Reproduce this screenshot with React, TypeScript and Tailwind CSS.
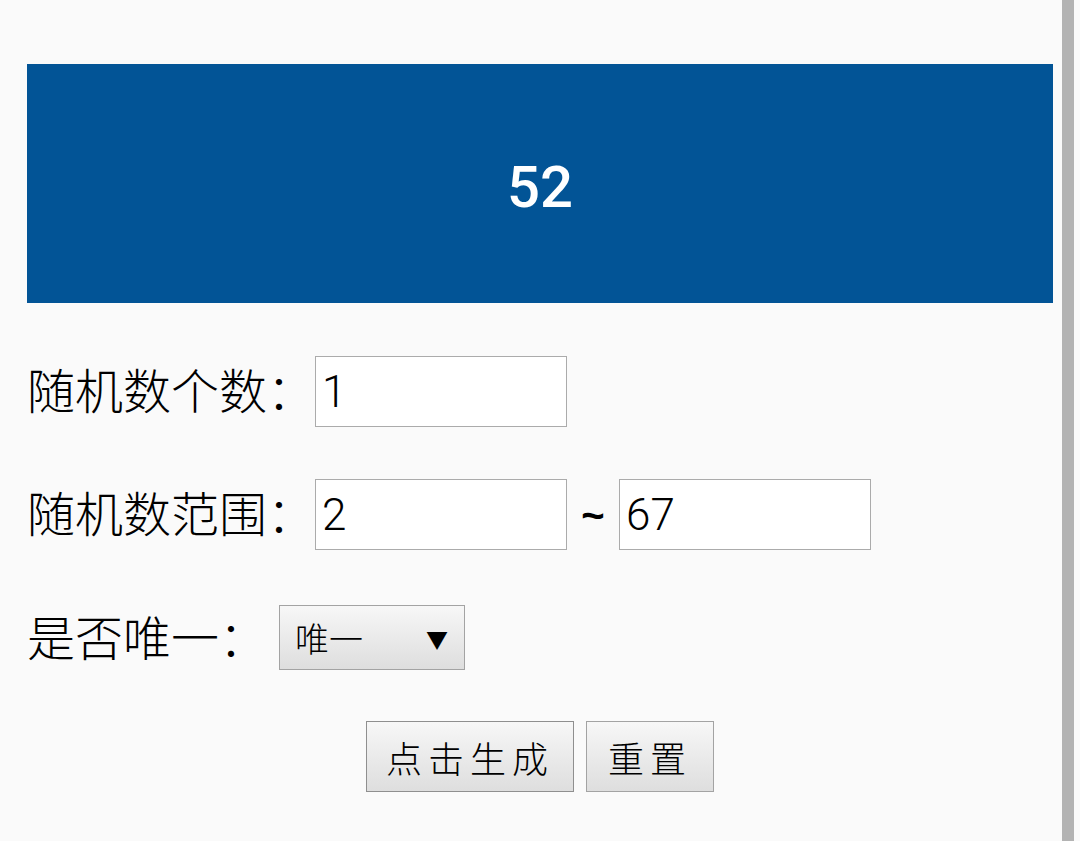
import React from "react";

const cjk = "font-['Noto_Sans_CJK_SC','Noto_Sans',sans-serif]";
const num = "font-['Roboto','Noto_Sans',sans-serif] font-light";

export default function App() {
  return (
    <div className={`relative min-h-[841px] w-full bg-[#fafafa] ${cjk} text-black`}>
      <div className="px-[27px] pt-[64px]">
        <div className="flex h-[239px] items-center justify-center bg-[#025496]">
          <span className="mt-[6px] font-['Roboto','Noto_Sans',sans-serif] text-[58px] font-medium leading-none text-white">52</span>
        </div>

        <div className="mt-[53px] flex items-center">
          <span className="mb-[8px] text-[48px] font-light leading-none">随机数个数：</span>
          <div className={`flex h-[71px] w-[252px] items-center border border-[#ababab] bg-white pl-[6px] text-[44px] leading-none ${num}`}>1</div>
        </div>

        <div className="mt-[52px] flex items-center">
          <span className="mb-[8px] text-[48px] font-light leading-none">随机数范围：</span>
          <div className={`flex h-[71px] w-[252px] items-center border border-[#ababab] bg-white pl-[6px] text-[44px] leading-none ${num}`}>2</div>
          <span className="w-[52px] text-center font-['Liberation_Sans',sans-serif] text-[40px] font-bold leading-none">~</span>
          <div className={`flex h-[71px] w-[252px] items-center border border-[#ababab] bg-white pl-[6px] text-[44px] leading-none ${num}`}>67</div>
        </div>

        <div className="mt-[55px] flex items-center">
          <span className="mb-[6px] text-[48px] font-light leading-none">是否唯一：</span>
          <div className="ml-[12px] flex h-[65px] w-[186px] items-center justify-between border border-[#a3a3a3] bg-gradient-to-b from-[#f7f7f7] to-[#dedede] pl-[15px] pr-[16px]">
            <span className="text-[34px] font-light leading-none">唯一</span>
            <span className="text-[22px] leading-none">▼</span>
          </div>
        </div>

        <div className="mt-[51px] flex justify-center gap-[12px]">
          <div className="flex h-[71px] w-[208px] items-center justify-center border border-[#8f8f8f] bg-gradient-to-b from-[#f7f7f7] to-[#dedede] text-[36px] font-light leading-none tracking-[6px]">
            点击生成
          </div>
          <div className="flex h-[71px] w-[128px] items-center justify-center border border-[#a3a3a3] bg-gradient-to-b from-[#f7f7f7] to-[#dedede] text-[36px] font-light leading-none tracking-[6px]">
            重置
          </div>
        </div>
      </div>

      <div className="absolute right-[6px] top-0 h-full w-[12px] bg-[#b3b3b3]" />
    </div>
  );
}
